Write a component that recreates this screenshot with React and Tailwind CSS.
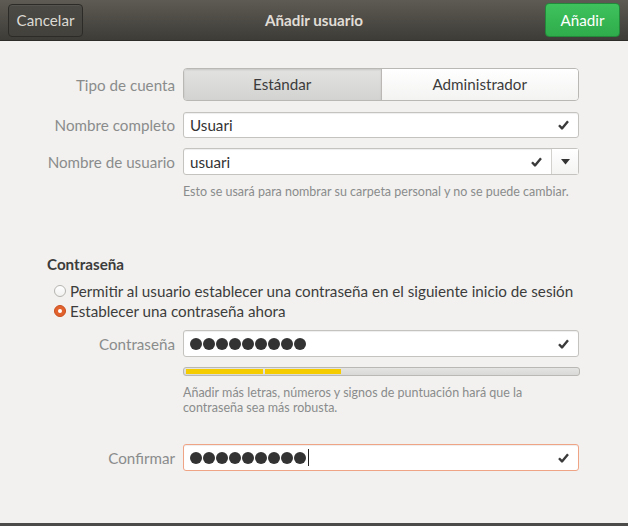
import React from 'react';

const font = { fontFamily: 'Lato, "Open Sans", sans-serif' };

function Check() {
  return (
    <svg width="11" height="10" viewBox="0 0 11 10" className="shrink-0">
      <path d="M1 5.2 L4 8.4 L10 1.2" fill="none" stroke="#3a3a3a" strokeWidth="2.4" strokeLinejoin="round" />
    </svg>
  );
}

function Dots({ cursor }) {
  return (
    <div className="flex items-center gap-[1px]">
      {Array.from({ length: 9 }).map((_, i) => (
        <span key={i} className="w-[12px] h-[12px] rounded-full bg-[#333333]" />
      ))}
      {cursor && <span className="ml-[1px] w-[1px] h-[17px] bg-[#222]" />}
    </div>
  );
}

function Label({ children }) {
  return (
    <div className="w-[175px] shrink-0 text-right text-[#8a8c8c] text-[15.2px] leading-[18px]">{children}</div>
  );
}

function Input({ children, focus, height = 'h-[26px]' }) {
  return (
    <div
      className={`w-[396px] ${height} rounded-[3px] bg-white flex items-center pl-[6px] pr-[9px] shadow-[inset_0_1px_1px_rgba(0,0,0,0.07)] ${
        focus ? 'border border-[#f0a486]' : 'border border-[#c4c3bf]'
      }`}
    >
      <div className="flex-1 text-[15.2px] leading-[18px] text-[#333]">{children}</div>
      <Check />
    </div>
  );
}

export default function App() {
  return (
    <div className="w-[628px] h-[526px] bg-[#f2f1ef] flex flex-col overflow-hidden" style={font}>
      {/* Header bar */}
      <div className="h-[41px] shrink-0 bg-gradient-to-b from-[#5d5b53] to-[#3e3c37] border-b border-[#2d2c28] flex items-center justify-between px-[8px]">
        <button className="w-[75px] h-[33px] rounded-[4px] border border-[#2c2b27] bg-gradient-to-b from-[#4c4a44] to-[#43413c] text-[#dcdad4] text-[15.2px] shadow-[inset_0_1px_0_rgba(255,255,255,0.06)]">
          Cancelar
        </button>
        <div className="text-[#e0ddd6] text-[15.2px] font-bold">Añadir usuario</div>
        <button className="w-[75px] h-[34px] rounded-[4px] border border-[#23893a] bg-gradient-to-b from-[#3fc35d] to-[#2fab4b] text-white text-[15.2px]">
          Añadir
        </button>
      </div>

      {/* Body */}
      <div className="flex-1 flex flex-col pt-[27px]">
        <div className="flex items-center gap-[8px]">
          <Label>Tipo de cuenta</Label>
          <div className="w-[396px] h-[33px] flex rounded-[4px] border border-[#b9b8b4] overflow-hidden text-[15.2px] text-[#3c3c3c]">
            <div className="flex-1 flex items-center justify-center bg-gradient-to-b from-[#e2e2e0] to-[#d3d3d1] shadow-[inset_0_1px_2px_rgba(0,0,0,0.12)] border-r border-[#b9b8b4]">
              Estándar
            </div>
            <div className="flex-1 flex items-center justify-center bg-gradient-to-b from-[#ffffff] to-[#f3f3f2]">
              Administrador
            </div>
          </div>
        </div>

        <div className="flex items-center gap-[8px] mt-[11px]">
          <Label>Nombre completo</Label>
          <Input>Usuari</Input>
        </div>

        <div className="flex items-center gap-[8px] mt-[10px]">
          <Label>Nombre de usuario</Label>
          <div className="w-[396px] h-[27px] rounded-[3px] bg-white border border-[#c4c3bf] flex items-stretch shadow-[inset_0_1px_1px_rgba(0,0,0,0.07)]">
            <div className="flex-1 flex items-center pl-[6px] pr-[9px]">
              <div className="flex-1 text-[15.2px] leading-[18px] text-[#333]">usuari</div>
              <Check />
            </div>
            <div className="w-[27px] border-l border-[#d2d1cd] flex items-center justify-center bg-gradient-to-b from-[#ffffff] to-[#f4f4f3]">
              <svg width="9" height="6" viewBox="0 0 9 6">
                <path d="M0 0 H9 L4.5 5.5 Z" fill="#333" />
              </svg>
            </div>
          </div>
        </div>

        <div className="ml-[183px] mt-[9px] text-[12.5px] text-[#8a8c8c] leading-[15px]">
          Esto se usará para nombrar su carpeta personal y no se puede cambiar.
        </div>

        <div className="ml-[47px] mt-[56px] text-[15.2px] font-bold text-[#3c3c3c] leading-[18px]">Contraseña</div>

        <div className="ml-[54px] mt-[9px] flex flex-col gap-[2px] text-[15.2px] text-[#3c3c3c]">
          <div className="flex items-center gap-[4px] h-[18px]">
            <span className="w-[12px] h-[12px] rounded-full border border-[#b5b4b0] bg-gradient-to-b from-white to-[#f1f1f0]" />
            <span>Permitir al usuario establecer una contraseña en el siguiente inicio de sesión</span>
          </div>
          <div className="flex items-center gap-[4px] h-[18px]">
            <span className="w-[12px] h-[12px] rounded-full bg-[#e2622d] border border-[#c94e1d] flex items-center justify-center">
              <span className="w-[4px] h-[4px] rounded-full bg-white" />
            </span>
            <span>Establecer una contraseña ahora</span>
          </div>
        </div>

        <div className="flex items-center gap-[8px] mt-[10px]">
          <Label>Contraseña</Label>
          <Input height="h-[27px]">
            <Dots />
          </Input>
        </div>

        <div className="ml-[183px] mt-[10px] w-[397px] h-[9px] rounded-[3px] border border-[#b9b8b4] bg-gradient-to-b from-[#e4e4e2] to-[#d9d9d7] flex items-center px-[2px] gap-[2px]">
          <span className="w-[77px] h-[5px] bg-[#f5cc00]" />
          <span className="w-[76px] h-[5px] bg-[#f5cc00]" />
        </div>

        <div className="ml-[183px] mt-[9px] text-[12.5px] text-[#8a8c8c] leading-[15px] w-[390px]">
          Añadir más letras, números y signos de puntuación hará que la contraseña sea más robusta.
        </div>

        <div className="flex items-center gap-[8px] mt-[29px]">
          <Label>Confirmar</Label>
          <Input focus height="h-[27px]">
            <Dots cursor />
          </Input>
        </div>

        <div className="flex-1" />
        <div className="h-[3px] bg-[#4b4b49]" />
      </div>
    </div>
  );
}
